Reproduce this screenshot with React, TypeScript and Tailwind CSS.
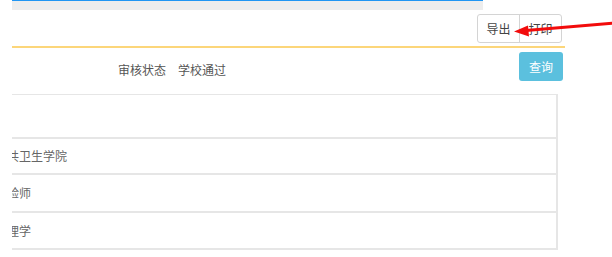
const font = { fontFamily: '"Noto Sans CJK SC", "Noto Sans", sans-serif' };

const rows = [
  { name: "公共卫生学院", h: "h-[36px]" },
  { name: "检验师", h: "h-[38px]" },
  { name: "护理学", h: "h-[37px]" },
];

const Arrow = () => (
  <svg className="pointer-events-none absolute left-0 top-0" width="612" height="257" viewBox="0 0 612 257">
    <line x1="614" y1="23" x2="526" y2="30.5" stroke="#f20c0c" strokeWidth="3" />
    <polygon points="514,31.5 528,25.5 529,36.5" fill="#f20c0c" />
  </svg>
);

export default function App() {
  return (
    <div className="relative h-[257px] w-[612px] overflow-hidden bg-white text-[12px] text-[#555]" style={font}>
      <div className="flex flex-col pl-[12px]">
        <div className="h-px w-[471px] bg-[#2196f3]" />
        <div className="h-[9px] w-[471px] bg-[#ededed]" />

        <div className="flex w-[553px] justify-end border-b-2 border-[#fcd67a] pb-[3px] pr-[3px] pt-[4px]">
          <div className="flex h-[29px] overflow-hidden rounded-[3px] border border-[#d4d4d4] bg-white text-[#444]">
            <button className="w-[41px] leading-[27px]">导出</button>
            <button className="w-[42px] border-l border-[#d4d4d4] leading-[27px]">打印</button>
          </div>
        </div>

        <div className="flex h-[46px] w-[553px] items-start pr-[2px] pt-[4px]">
          <span className="ml-[106px] mt-[9px] leading-[17px]">审核状态</span>
          <span className="ml-[12px] mt-[9px] leading-[17px]">学校通过</span>
          <div className="flex-1" />
          <button className="h-[29px] w-[44px] rounded-[3px] bg-[#5bc0de] text-white">查询</button>
        </div>

        <div className="w-[546px] overflow-hidden border-r-2 border-t border-[#e6e6e6]">
          <div className="h-[44px] border-b-2 border-[#e6e6e6]" />
          {rows.map((r) => (
            <div key={r.name} className={`flex items-center border-b-2 border-[#e6e6e6] ${r.h}`}>
              <span className="-ml-[17px] whitespace-nowrap text-[#666]">{r.name}</span>
            </div>
          ))}
        </div>
      </div>
      <Arrow />
    </div>
  );
}
